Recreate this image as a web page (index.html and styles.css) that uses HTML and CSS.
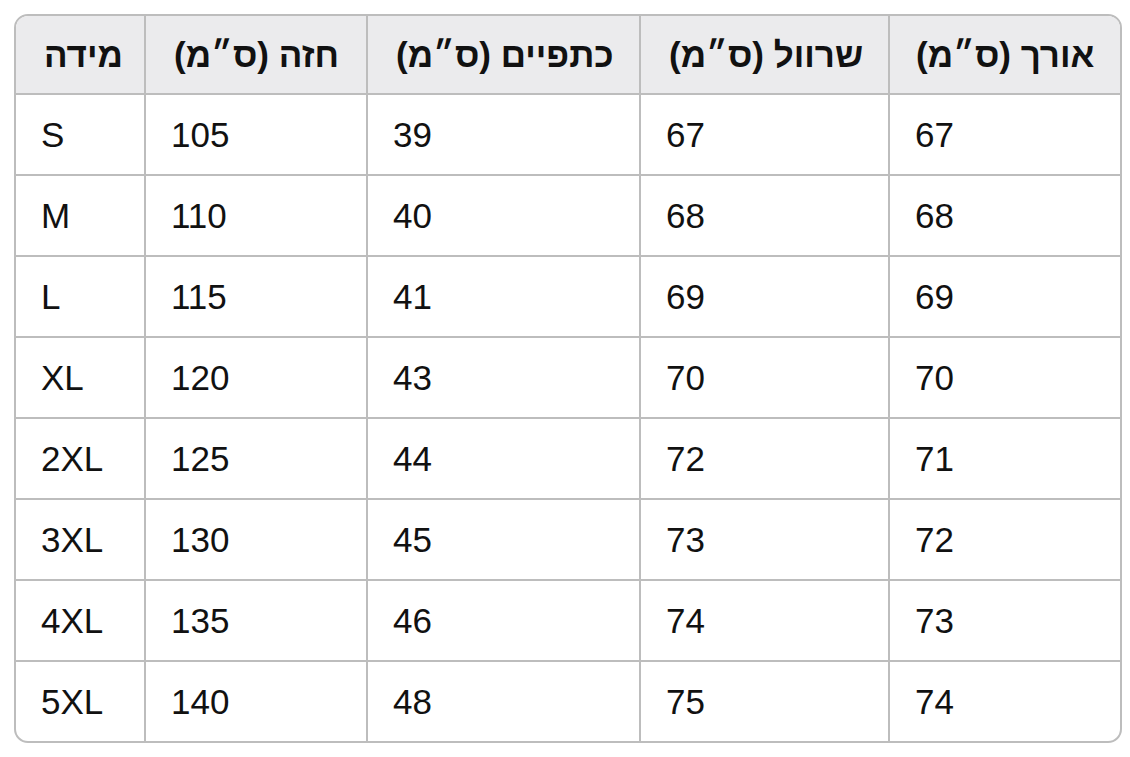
FILE: index.html
```html
<!DOCTYPE html>
<html lang="he">
<head>
<meta charset="utf-8">
<title>טבלת מידות</title>
<link rel="stylesheet" href="styles.css">
</head>
<body>
<div class="table-wrap">
  <table class="size-table">
    <colgroup>
      <col class="c1"><col class="c2"><col class="c3"><col class="c4"><col class="c5">
    </colgroup>
    <thead>
      <tr>
        <th dir="rtl">מידה</th>
        <th dir="rtl">חזה (ס״מ)</th>
        <th dir="rtl">כתפיים (ס״מ)</th>
        <th dir="rtl">שרוול (ס״מ)</th>
        <th dir="rtl">אורך (ס״מ)</th>
      </tr>
    </thead>
    <tbody>
      <tr><td>S</td><td>105</td><td>39</td><td>67</td><td>67</td></tr>
      <tr><td>M</td><td>110</td><td>40</td><td>68</td><td>68</td></tr>
      <tr><td>L</td><td>115</td><td>41</td><td>69</td><td>69</td></tr>
      <tr><td>XL</td><td>120</td><td>43</td><td>70</td><td>70</td></tr>
      <tr><td>2XL</td><td>125</td><td>44</td><td>72</td><td>71</td></tr>
      <tr><td>3XL</td><td>130</td><td>45</td><td>73</td><td>72</td></tr>
      <tr><td>4XL</td><td>135</td><td>46</td><td>74</td><td>73</td></tr>
      <tr><td>5XL</td><td>140</td><td>48</td><td>75</td><td>74</td></tr>
    </tbody>
  </table>
</div>
</body>
</html>
```
FILE: styles.css
```css
html, body {
  margin: 0;
  padding: 0;
  background: #ffffff;
}

body {
  font-family: "Liberation Sans", Arial, sans-serif;
  color: #111111;
}

.table-wrap {
  box-sizing: border-box;
  width: 1108px;
  margin: 14px 0 0 14px;
  border: 2px solid #bdbdbd;
  border-radius: 14px;
  overflow: hidden;
}

.size-table {
  width: 1104px;
  table-layout: fixed;
  border-collapse: separate;
  border-spacing: 0;
}

.c1 { width: 130px; }
.c2 { width: 222px; }
.c3 { width: 273px; }
.c4 { width: 249px; }
.c5 { width: 230px; }

.size-table th,
.size-table td {
  box-sizing: border-box;
  padding: 23px 6px 22px 25px;
  font-size: 35px;
  line-height: 34px;
  text-align: left;
  vertical-align: middle;
  border-right: 2px solid #bdbdbd;
  border-bottom: 2px solid #bdbdbd;
  white-space: nowrap;
}

.size-table th {
  background: #ebebed;
  font-weight: 700;
  padding-top: 22px;
  padding-bottom: 21px;
  padding-left: 26px;
}

.size-table td {
  font-weight: 400;
}

.size-table tr > :last-child {
  border-right: none;
}

.size-table tbody tr:last-child td {
  border-bottom: none;
}
```
